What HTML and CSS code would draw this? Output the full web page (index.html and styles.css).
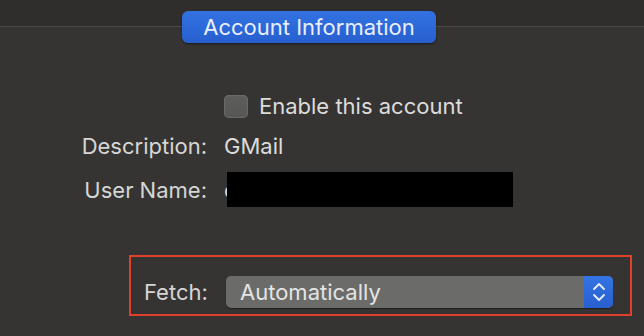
FILE: index.html
```html
<!DOCTYPE html>
<html lang="en">
<head>
  <meta charset="UTF-8" />
  <title>Account Information</title>
  <link rel="stylesheet" href="styles.css">
</head>
<body>
  <div class="topbar"></div>
  <div class="tabs">
    <button class="tab active">Account Information</button>
  </div>

  <div class="form">
    <div class="row row-check">
      <span class="label"></span>
      <span class="value">
        <span class="checkbox"></span>
        Enable this account
      </span>
    </div>
    <div class="row row-desc">
      <span class="label">Description:</span>
      <span class="value">GMail</span>
    </div>
    <div class="row row-user">
      <span class="label">User Name:</span>
      <span class="value">c<span class="redact"></span></span>
    </div>
  </div>

  <div class="highlight">
    <span class="fetch-label">Fetch:</span>
    <div class="popup">
      <span class="popup-text">Automatically</span>
      <span class="popup-arrows">
        <svg width="14" height="22" viewBox="0 0 14 22">
          <path d="M2 8 L7 3 L12 8 M2 14 L7 19 L12 14" fill="none" stroke="#e8eefc" stroke-width="1.8" stroke-linecap="round" stroke-linejoin="round"/>
        </svg>
      </span>
    </div>
  </div>
</body>
</html>
```

FILE: styles.css
```css
* {
  margin: 0;
  padding: 0;
  box-sizing: border-box;
}

body {
  font-family: 'Inter', 'Liberation Sans', sans-serif;
  background: #353432;
  color: #dcdcdb;
  font-size: 22px;
  line-height: 26px;
  width: 644px;
  height: 336px;
  overflow: hidden;
}

.topbar {
  height: 27px;
  background: #2f2e2c;
  border-bottom: 1px solid #4a4947;
}

.tabs {
  display: flex;
  margin-top: -16px;
  padding-left: 182px;
}

.tab {
  width: 254px;
  height: 32px;
  border: none;
  border-radius: 6px;
  background: linear-gradient(#3272e2, #285fcf);
  box-shadow: 0 1px 2px rgba(0, 0, 0, 0.5);
  color: #e9efff;
  font-family: 'Inter', 'Liberation Sans', sans-serif;
  font-size: 22px;
}

.form {
  display: flex;
  flex-direction: column;
}

.row {
  display: flex;
  gap: 17px;
  height: 26px;
}

.row-check {
  margin-top: 50px;
}

.row-desc {
  margin-top: 14px;
}

.row-user {
  margin-top: 18px;
}

.label {
  width: 207px;
  text-align: right;
  color: #d6d6d5;
}

.value {
  display: flex;
  align-items: center;
  position: relative;
}

.checkbox {
  width: 24px;
  height: 23px;
  margin-right: 11px;
  border-radius: 5px;
  background: linear-gradient(#5e5e5d, #565655);
  box-shadow: inset 0 0 0 1px #6a6a69;
}

.redact {
  position: absolute;
  left: 3px;
  top: -5px;
  width: 286px;
  height: 35px;
  background: #000;
}

.highlight {
  display: flex;
  align-items: center;
  margin: 52px 0 0 129px;
  width: 503px;
  height: 61px;
  border: 2px solid #e0412a;
  padding: 13px 0 0 13px;
}

.fetch-label {
  width: 82px;
  color: #d6d6d5;
}

.popup {
  display: flex;
  width: 387px;
  height: 32px;
  border-radius: 5px;
  background: #6b6b6a;
  box-shadow: 0 1px 1px rgba(0, 0, 0, 0.4);
  overflow: hidden;
}

.popup-text {
  flex: 1;
  padding-left: 14px;
  line-height: 32px;
  color: #e4e4e3;
}

.popup-arrows {
  width: 29px;
  display: flex;
  align-items: center;
  justify-content: center;
  background: linear-gradient(#3474e4, #285fcf);
}
```
